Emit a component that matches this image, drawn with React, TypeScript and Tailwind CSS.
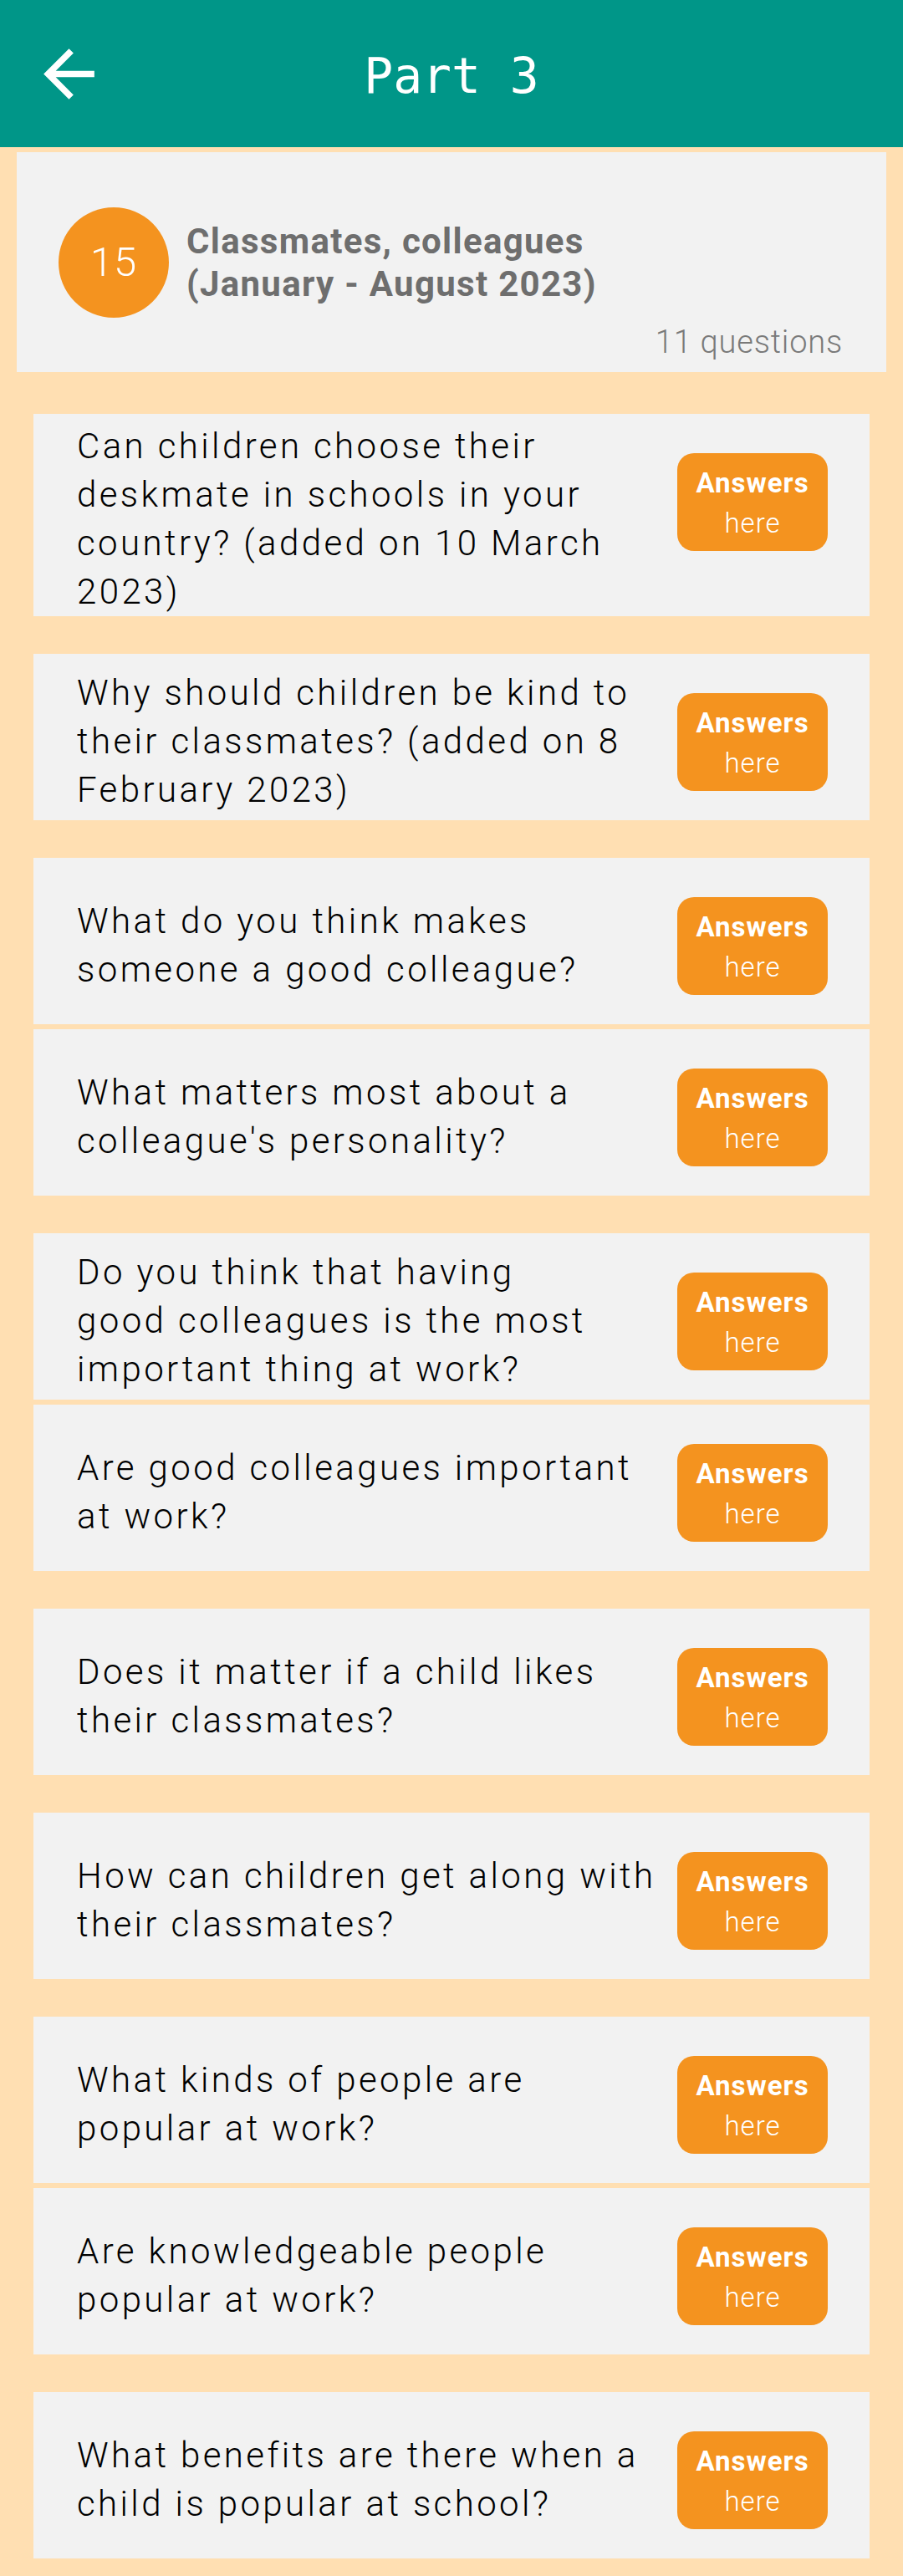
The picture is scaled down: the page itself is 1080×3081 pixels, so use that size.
const groups: string[][] = [
  ['Can children choose their deskmate in schools in your country? (added on 10 March 2023)'],
  ['Why should children be kind to their classmates? (added on 8 February 2023)'],
  ['What do you think makes someone a good colleague?', "What matters most about a colleague's personality?"],
  ['Do you think that having\ngood colleagues is the most important thing at work?', 'Are good colleagues important at work?'],
  ['Does it matter if a child likes their classmates?'],
  ['How can children get along with their classmates?'],
  ['What kinds of people are popular at work?', 'Are knowledgeable people popular at work?'],
  ['What benefits are there when a child is popular at school?'],
]

function QuestionCard({ text }: { text: string }) {
  return (
    <div className="flex items-center bg-[#f2f2f2] mx-[40px]">
      <p className="flex-1 whitespace-pre-line pl-[52px] pr-[20px] pt-[10px] text-[42px] leading-[58px] tracking-[3.4px] font-light text-black">
        {text}
      </p>
      <button className="self-start mt-[47px] mb-[35px] mr-[50px] w-[180px] h-[117px] shrink-0 rounded-[20px] bg-[#f4931f] text-white flex flex-col items-center justify-center pt-[3px]">
        <span className="text-[33px] leading-[48px] font-bold tracking-[1px]">Answers</span>
        <span className="text-[33px] leading-[48px] font-light tracking-[1px]">here</span>
      </button>
    </div>
  )
}

export default function App() {
  return (
    <div className="min-h-[3081px] bg-[#ffdfb2] font-['Roboto',sans-serif] pb-[21px]">
      <div className="relative h-[176px] bg-[#009688] flex items-center justify-center">
        <svg className="absolute left-[37px] top-[43px]" width="91" height="91" viewBox="0 0 24 24" fill="#ffffff">
          <path d="M20 11H7.83l5.59-5.59L12 4l-8 8 8 8 1.41-1.41L7.83 13H20v-2z" />
        </svg>
        <h1 className="mt-[6px] font-['DejaVu_Sans_Mono',monospace] text-[58px] text-white leading-none">Part 3</h1>
      </div>

      <div className="mt-[6px] mx-[20px] bg-[#f2f2f2] pt-[65px] pb-[13px]">
        <div className="flex items-center h-[133px] pl-[50px]">
          <div className="w-[132px] h-[132px] rounded-full bg-[#f4931f] flex items-center justify-center text-white text-[49px] font-light tracking-[1px]">
            15
          </div>
          <div className="ml-[21px] text-[42px] leading-[51px] font-bold tracking-[1.3px] text-[#6e6e6e]">
            <p>Classmates, colleagues</p>
            <p>(January - August 2023)</p>
          </div>
        </div>
        <p className="mt-[7px] pr-[52px] text-right text-[38px] leading-[45px] tracking-[0.8px] font-light text-[#7a7a7a]">11 questions</p>
      </div>

      <div className="mt-[50px] flex flex-col gap-[45px]">
        {groups.map((g, i) => (
          <div key={i} className="flex flex-col gap-[6px]">
            {g.map((q) => (
              <QuestionCard key={q} text={q} />
            ))}
          </div>
        ))}
      </div>
    </div>
  )
}
